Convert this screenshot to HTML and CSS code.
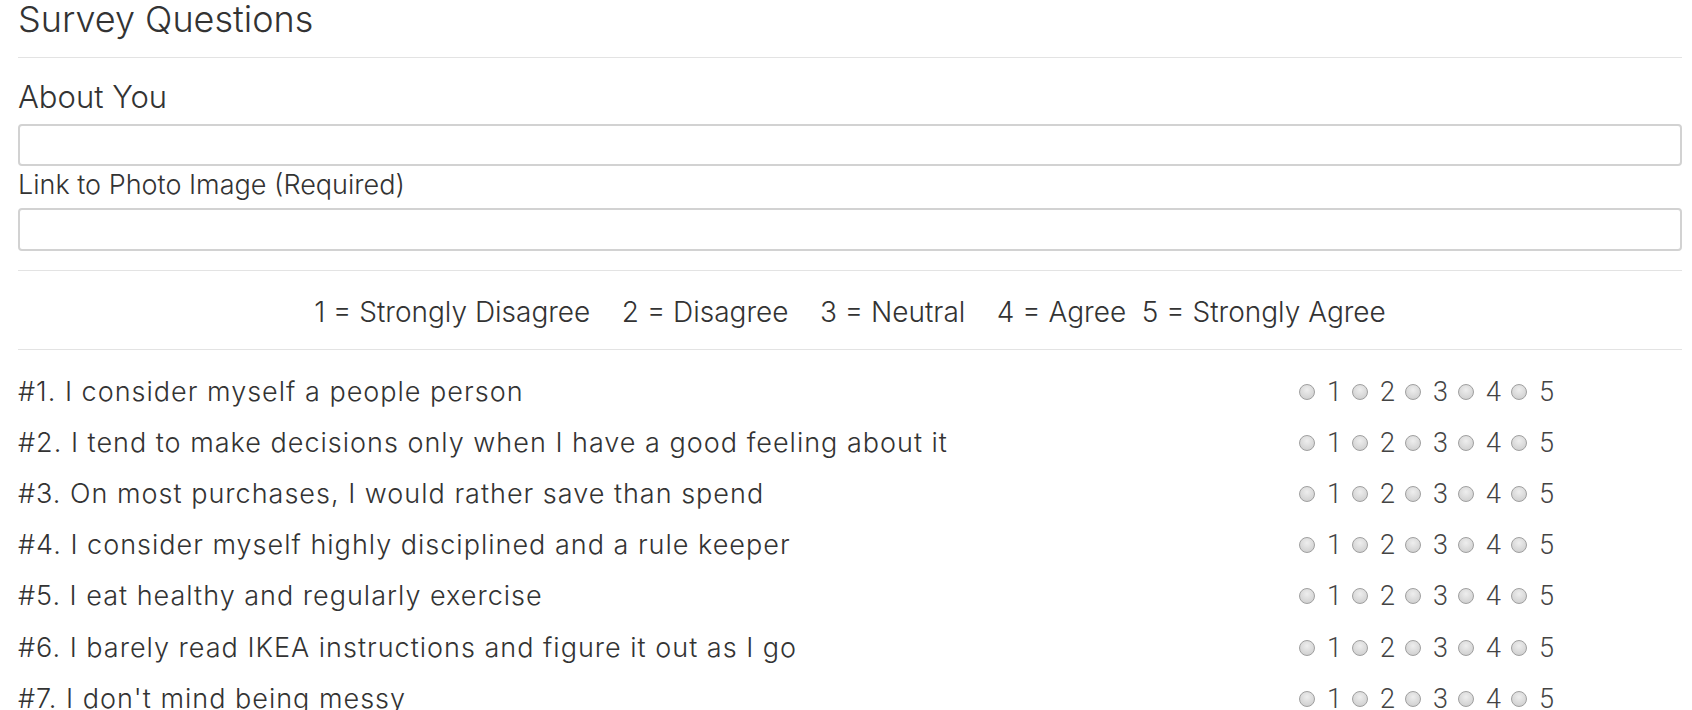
FILE: index.html
```html
<!DOCTYPE html>
<html lang="en">
<head>
<meta charset="utf-8">
<title>Survey Questions</title>
<link rel="stylesheet" href="styles.css">
</head>
<body>
<main class="page">
  <h1 class="title">Survey Questions</h1>
  <hr class="rule">
  <h2 class="section">About You</h2>
  <input class="field" type="text" aria-label="About You">
  <label class="field-label">Link to Photo Image (Required)</label>
  <input class="field field-second" type="text" aria-label="Link to Photo Image">
  <hr class="rule rule-mid">
  <p class="scale">1 = Strongly Disagree &nbsp;&nbsp; 2 = Disagree &nbsp;&nbsp; 3 = Neutral &nbsp;&nbsp; 4 = Agree &nbsp;5 = Strongly Agree</p>
  <hr class="rule rule-low">
  <div class="questions">
    <div class="q"><span class="q-text">#1. I consider myself a people person</span>
      <div class="choices"><label class="choice"><input type="radio" name="q1">1</label><label class="choice"><input type="radio" name="q1">2</label><label class="choice"><input type="radio" name="q1">3</label><label class="choice"><input type="radio" name="q1">4</label><label class="choice"><input type="radio" name="q1">5</label></div></div>
    <div class="q"><span class="q-text">#2. I tend to make decisions only when I have a good feeling about it</span>
      <div class="choices"><label class="choice"><input type="radio" name="q2">1</label><label class="choice"><input type="radio" name="q2">2</label><label class="choice"><input type="radio" name="q2">3</label><label class="choice"><input type="radio" name="q2">4</label><label class="choice"><input type="radio" name="q2">5</label></div></div>
    <div class="q"><span class="q-text">#3. On most purchases, I would rather save than spend</span>
      <div class="choices"><label class="choice"><input type="radio" name="q3">1</label><label class="choice"><input type="radio" name="q3">2</label><label class="choice"><input type="radio" name="q3">3</label><label class="choice"><input type="radio" name="q3">4</label><label class="choice"><input type="radio" name="q3">5</label></div></div>
    <div class="q"><span class="q-text">#4. I consider myself highly disciplined and a rule keeper</span>
      <div class="choices"><label class="choice"><input type="radio" name="q4">1</label><label class="choice"><input type="radio" name="q4">2</label><label class="choice"><input type="radio" name="q4">3</label><label class="choice"><input type="radio" name="q4">4</label><label class="choice"><input type="radio" name="q4">5</label></div></div>
    <div class="q"><span class="q-text">#5. I eat healthy and regularly exercise</span>
      <div class="choices"><label class="choice"><input type="radio" name="q5">1</label><label class="choice"><input type="radio" name="q5">2</label><label class="choice"><input type="radio" name="q5">3</label><label class="choice"><input type="radio" name="q5">4</label><label class="choice"><input type="radio" name="q5">5</label></div></div>
    <div class="q"><span class="q-text">#6. I barely read IKEA instructions and figure it out as I go</span>
      <div class="choices"><label class="choice"><input type="radio" name="q6">1</label><label class="choice"><input type="radio" name="q6">2</label><label class="choice"><input type="radio" name="q6">3</label><label class="choice"><input type="radio" name="q6">4</label><label class="choice"><input type="radio" name="q6">5</label></div></div>
    <div class="q"><span class="q-text">#7. I don't mind being messy</span>
      <div class="choices"><label class="choice"><input type="radio" name="q7">1</label><label class="choice"><input type="radio" name="q7">2</label><label class="choice"><input type="radio" name="q7">3</label><label class="choice"><input type="radio" name="q7">4</label><label class="choice"><input type="radio" name="q7">5</label></div></div>
  </div>
</main>
</body>
</html>
```
FILE: styles.css
```css
html, body {
  margin: 0;
  padding: 0;
  background: #ffffff;
}

body {
  font-family: Inter, "Noto Sans", "Liberation Sans", sans-serif;
  font-weight: 300;
  color: #333333;
}

.page {
  padding: 0 10px 0 18px;
  display: flex;
  flex-direction: column;
}

.title {
  margin: 0;
  font-size: 36px;
  font-weight: 300;
  line-height: 38px;
  height: 38px;
}

.rule {
  border: 0;
  border-top: 1px solid #e3e3e3;
  margin: 19px 0 0 0;
  height: 0;
}

.section {
  margin: 19px 0 0 0;
  font-size: 31px;
  font-weight: 300;
  line-height: 40px;
}

.field {
  box-sizing: border-box;
  display: block;
  width: 100%;
  height: 42px;
  margin: 7px 0 0 0;
  border: 2px solid #d2d2d2;
  border-radius: 4px;
  background: #fff;
  font: inherit;
}

.field-label {
  display: block;
  font-size: 27px;
  line-height: 38px;
  margin: 0;
}

.field-second {
  margin-top: 4px;
  height: 43px;
}

.rule-mid {
  margin-top: 19px;
}

.scale {
  margin: 0;
  padding: 21px 0 0 0;
  height: 66px;
  box-sizing: border-box;
  text-align: center;
  font-size: 28px;
  line-height: 40px;
  white-space: pre;
}

.rule-low {
  margin-top: 12px;
}

.questions {
  display: flex;
  flex-direction: column;
  padding-top: 16px;
}

.q {
  display: grid;
  grid-template-columns: minmax(0, 1fr) 383px;
  align-items: center;
  height: 51.2px;
}

.q-text {
  font-size: 27px;
  letter-spacing: 1px;
  line-height: 36px;
  white-space: nowrap;
}

.choices {
  display: flex;
  align-items: center;
}

.choice {
  display: inline-flex;
  align-items: center;
  font-family: Roboto, "Liberation Sans", Arial, sans-serif;
  font-weight: 300;
  font-size: 27px;
  color: #444;
  line-height: 36px;
  margin-right: 10px;
}

.choice input {
  appearance: none;
  -webkit-appearance: none;
  box-sizing: border-box;
  flex: none;
  width: 16px;
  height: 16px;
  margin: 0 12px 0 0;
  border-radius: 50%;
  border: 1px solid #9f9f9f;
  background: radial-gradient(circle at 50% 35%, #eeeeee 0%, #d6d6d6 65%, #c8c8c8 100%);
}
```
